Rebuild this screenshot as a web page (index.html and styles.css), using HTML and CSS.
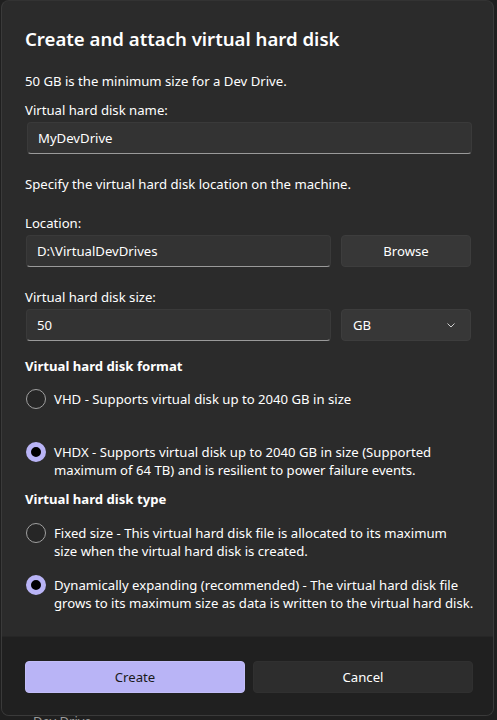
FILE: index.html
```html
<!DOCTYPE html>
<html>
<head>
<meta charset="utf-8">
<link rel="stylesheet" href="styles.css">
</head>
<body>
<div class="dialog">
  <div class="content">
    <h1 class="title">Create and attach virtual hard disk</h1>
    <p class="intro">50 GB is the minimum size for a Dev Drive.</p>
    <label class="label lbl-name">Virtual hard disk name:</label>
    <div class="input input-name">MyDevDrive</div>
    <p class="para">Specify the virtual hard disk location on the machine.</p>
    <label class="label lbl-gap">Location:</label>
    <div class="row">
      <div class="input input-half">D:\VirtualDevDrives</div>
      <div class="btn side">Browse</div>
    </div>
    <label class="label lbl-gap">Virtual hard disk size:</label>
    <div class="row">
      <div class="input input-half">50</div>
      <div class="btn side combo"><span>GB</span>
        <svg width="8" height="5" viewBox="0 0 8 5"><path d="M0.8 0.8 L4 4 L7.2 0.8" fill="none" stroke="#d0d0d0" stroke-width="1" stroke-linecap="round" stroke-linejoin="round"/></svg>
      </div>
    </div>
    <h2 class="heading h-format">Virtual hard disk format</h2>
    <div class="radio r-vhd"><span class="dot"></span><span class="rtext">VHD - Supports virtual disk up to 2040 GB in size</span></div>
    <div class="radio r-vhdx"><span class="dot on"></span><span class="rtext"><span class="ln">VHDX - Supports virtual disk up to 2040 GB in size (Supported</span><span class="ln">maximum of 64 TB) and is resilient to power failure events.</span></span></div>
    <h2 class="heading h-type">Virtual hard disk type</h2>
    <div class="radio r-fixed"><span class="dot"></span><span class="rtext"><span class="ln">Fixed size - This virtual hard disk file is allocated to its maximum</span><span class="ln">size when the virtual hard disk is created.</span></span></div>
    <div class="radio r-dyn"><span class="dot on"></span><span class="rtext"><span class="ln">Dynamically expanding (recommended) - The virtual hard disk file</span><span class="ln">grows to its maximum size as data is written to the virtual hard disk.</span></span></div>
  </div>
  <div class="footer">
    <div class="btn primary">Create</div>
    <div class="btn secondary">Cancel</div>
  </div>
</div>
<div class="behind">Dev Drive</div>
</body>
</html>
```

FILE: styles.css
```css
* { box-sizing: border-box; }
html, body { margin: 0; padding: 0; }
body {
  background: #1f1f1f;
  font-family: "Noto Sans", "Open Sans", sans-serif;
  font-size: 13.15px;
  color: #ffffff;
  width: 497px;
  height: 720px;
  overflow: hidden;
}
.dialog {
  position: relative;
  z-index: 1;
  margin-left: 1px;
  width: 493px;
  height: 716px;
  background: #2b2b2b;
  border: 1px solid #3a3a3a;
  border-top-color: #333;
  border-radius: 8px;
  overflow: hidden;
  display: flex;
  flex-direction: column;
}
.content {
  flex: 1;
  padding: 24px 23px 0 23px;
  display: flex;
  flex-direction: column;
  align-items: flex-start;
}
.title {
  margin: 0;
  font-size: 18.6px;
  font-weight: 600;
  line-height: 28px;
}
.intro, .para { margin: 19px 0 0; line-height: 18px; }
.para { margin-top: 21px; }
.label { display: block; line-height: 18px; }
.lbl-name { margin-top: 11px; }
.lbl-gap { margin-top: 21px; }
.input {
  margin-top: 3px;
  height: 32px;
  background: #333333;
  border: 1px solid #3a3a3a;
  border-bottom: 1px solid #9a9a9a;
  border-radius: 4px;
  display: flex;
  align-items: center;
  padding-left: 10px;
  line-height: 18px;
}
.input-name { margin-left: 2px; width: 445px; }
.row { display: flex; gap: 10px; margin-top: 3px; margin-left: 1px; }
.row .input { margin-top: 0; }
.input-half { width: 305px; }
.btn {
  height: 32px;
  border-radius: 4px;
  display: flex;
  align-items: center;
  justify-content: center;
  background: #373737;
  border: 1px solid #3d3d3d;
}
.side { width: 130px; }
.combo { justify-content: space-between; padding: 0 15px 0 11px; }
.combo svg { margin-top: 1px; }
.heading {
  margin: 0;
  font-size: 13.15px;
  font-weight: 700;
  line-height: 18px;
}
.h-format { margin-top: 16px; }
.h-type { margin-top: 11px; }
.radio { display: flex; align-items: flex-start; gap: 8px; margin-left: 1px; line-height: 18px; }
.r-vhd { margin-top: 15px; }
.r-vhdx { margin-top: 34px; }
.r-fixed { margin-top: 16px; }
.r-dyn { margin-top: 16px; }
.rtext { display: flex; flex-direction: column; }
.ln { white-space: nowrap; }
.dot {
  flex: none;
  width: 20px;
  height: 20px;
  margin-top: -1px;
  border-radius: 50%;
  border: 1px solid #a0a0a0;
  background: #262626;
}
.dot.on {
  border: 5px solid #b9b4f6;
  background: #000;
}
.footer {
  height: 79px;
  background: #202020;
  border-top: 1px solid #262626;
  display: flex;
  gap: 8px;
  padding: 24px 0 0 23px;
}
.footer .btn { width: 220px; height: 32px; }
.primary { background: #b9b4f6; border-color: #c2bdf8; color: #1a1a1a; }
.secondary { background: #2d2d2d; border-color: #303030; }
.behind {
  position: relative;
  z-index: 0;
  margin-top: -4px;
  padding-left: 33px;
  color: #9a9a9a;
  font-size: 13px;
  line-height: 18px;
}
```
